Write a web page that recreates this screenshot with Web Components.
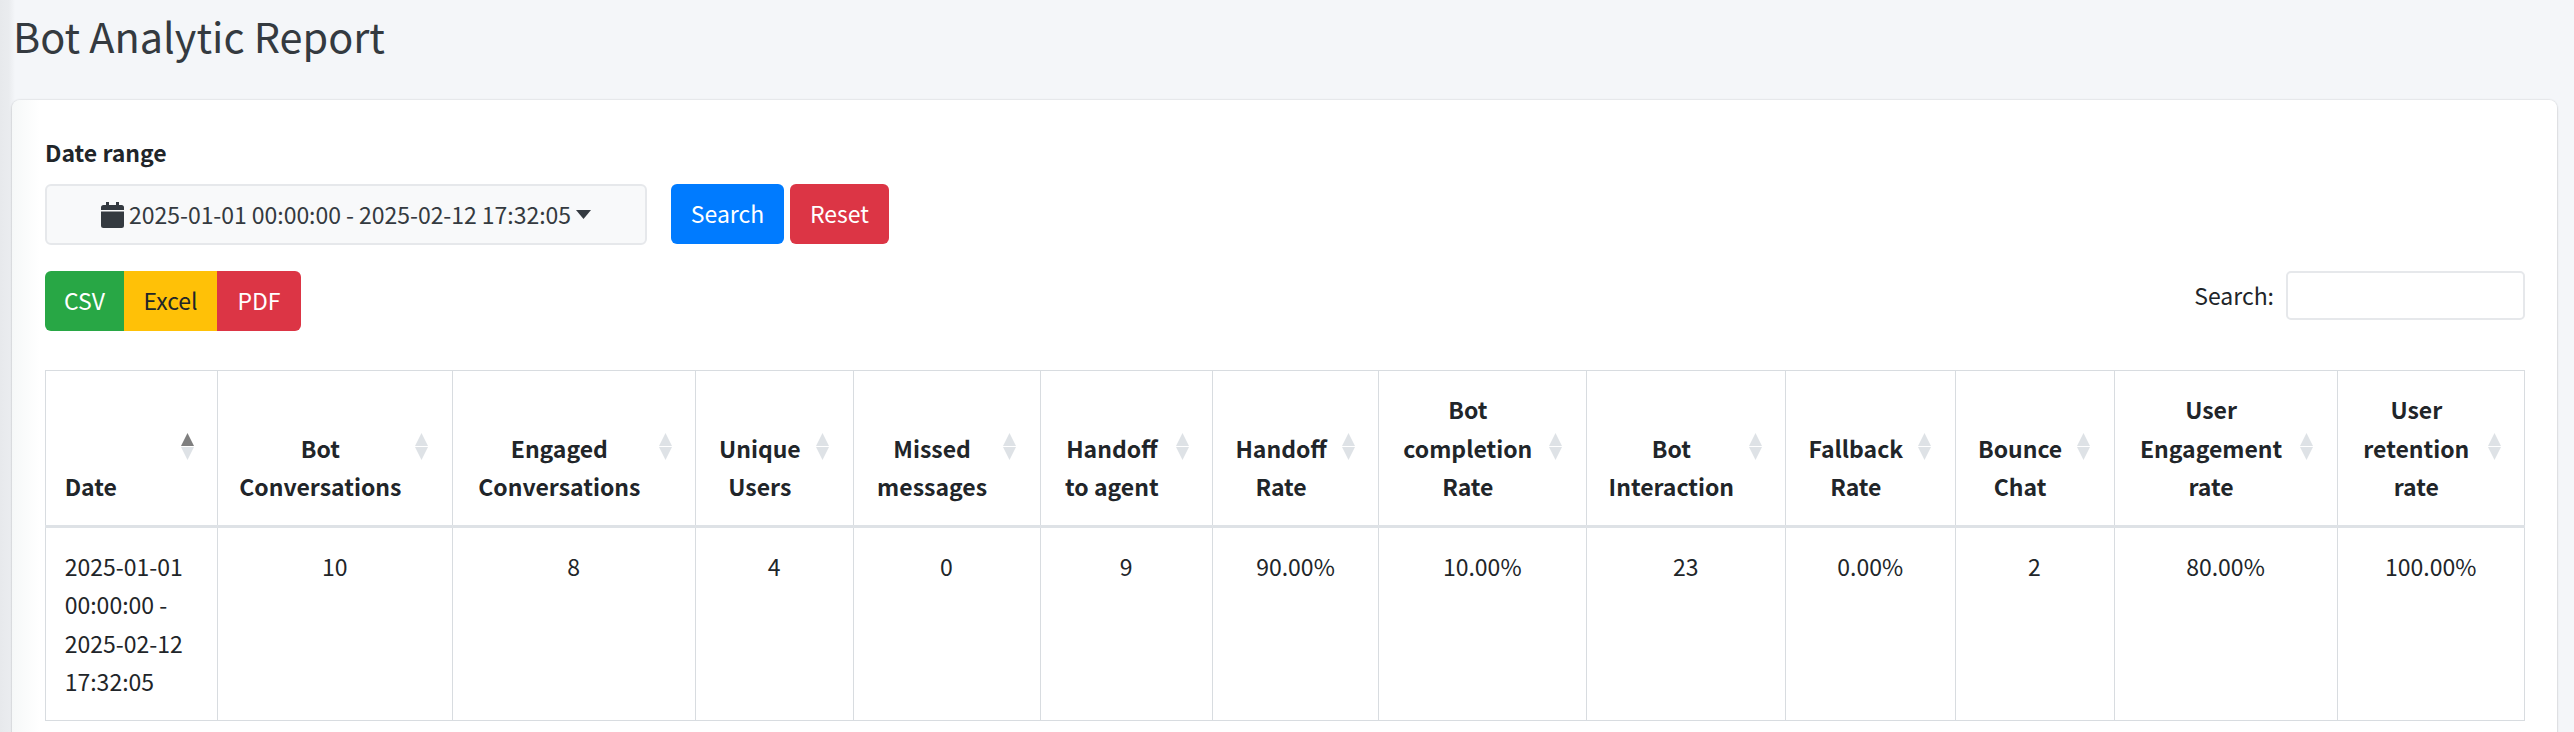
<!DOCTYPE html>
<html>
<head>
<meta charset="utf-8">
<title>Bot Analytic Report</title>
<style>
  html, body { margin: 0; height: 100%; overflow: hidden; }
  body {
    background: linear-gradient(90deg, #e7e9ec 0, #eaecef 9px, #f4f6f9 15px);
    color: #212529;
    font: 400 23px/38.4px "Noto Sans CJK SC", "Noto Sans", sans-serif;
  }
</style>
</head>
<body>

<template id="report-page-template">
  <style>
    :host { display: block; padding: 0 17px 0 12px; box-sizing: border-box; height: 732px; overflow: hidden; }
    h1 { margin: 0; height: 100px; padding-left: 1px; font-size: 41.4px; font-weight: 400; line-height: 70px; color: #343a40; }
    .card { background: linear-gradient(90deg, #f6f8f8, #fff 28px); border-radius: 8px; box-shadow: 0 0 2px rgba(0,0,0,.2), 0 2px 3px rgba(0,0,0,.1); padding: 32px 32px 40px 33px; height: 700px; box-sizing: border-box; }
  </style>
  <h1><slot name="title"></slot></h1>
  <div class="card"><slot></slot></div>
</template>

<template id="date-filter-template">
  <style>
    :host { display: block; }
    label { display: block; font-weight: 700; height: 52px; line-height: 40px; }
    .row { display: flex; align-items: flex-start; }
    .picker {
      width: 602px; height: 61px; box-sizing: border-box; margin-right: 24px;
      display: flex; align-items: center; justify-content: center; gap: 5px;
      background: #f8f9fa; border: 2px solid #e6e8eb; border-radius: 6px; color: #343a40;
      letter-spacing: -0.04px;
    }
    .picker svg { display: block; }
    ::slotted(action-button) { margin-right: 6px; }
  </style>
  <label>Date range</label>
  <div class="row">
    <div class="picker">
      <svg width="23" height="26" viewBox="0 0 23 26"><path fill="#343a40" d="M5 0h3v3h7V0h3v3h2.500A2.500 2.500 0 0 1 23 5.500V8H0V5.500A2.500 2.500 0 0 1 2.500 3H5zM0 9.500h23v14a2.500 2.500 0 0 1-2.500 2.500h-18A2.500 2.500 0 0 1 0 23.500z"/></svg>
      <span>2025-01-01 00:00:00 - 2025-02-12 17:32:05</span>
      <svg width="15" height="9" viewBox="0 0 15 9"><path fill="#343a40" d="M0 0h15L7.500 9z"/></svg>
    </div>
    <slot></slot>
  </div>
</template>

<template id="action-button-template">
  <style>
    :host { display: inline-block; }
    div { width: var(--w); height: 60px; box-sizing: border-box; padding-bottom: 2px; display: flex; align-items: center; justify-content: center; background: var(--bg); color: var(--fg, #fff); border-radius: var(--radius, 6px); }
  </style>
  <div><slot></slot></div>
</template>

<template id="table-toolbar-template">
  <style>
    :host { display: flex; justify-content: space-between; align-items: flex-start; margin-top: 26px; height: 99px; }
    .group { display: flex; }
    .search { display: flex; align-items: center; gap: 12px; height: 49px; }
    .box { width: 239px; height: 49px; box-sizing: border-box; background: #fff; border: 2px solid #e6e8eb; border-radius: 5px; }
  </style>
  <div class="group"><slot></slot></div>
  <div class="search"><span>Search:</span><div class="box"></div></div>
</template>

<template id="sort-arrows-template">
  <style>
    :host { display: block; flex: none; align-self: center; width: 13px; height: 27px; margin: 0 0 2px 11.500px; }
    svg { display: block; }
  </style>
  <svg width="13" height="27" viewBox="0 0 13 27">
    <path id="up" fill="#dee2e6" d="M6.500 0 13 13H0z"/>
    <path fill="#dee2e6" d="M0 14h13L6.500 27z"/>
  </svg>
</template>

<template id="report-table-template">
  <style>
    :host { display: block; margin-left: -0.500px; }
    table { border-collapse: collapse; table-layout: fixed; width: 2480px; }
    th, td { border: 1px solid #d8dce0; padding: 19.200px; text-align: center; vertical-align: top; box-sizing: border-box; }
    th { font-weight: 700; border-bottom: 3.200px solid #dee2e6; height: 155px; padding-right: 23.500px; }
    th div { display: flex; height: 115.200px; }
    th span { flex: 1; align-self: flex-end; white-space: pre-line; }
    th:first-child, td:first-child { text-align: left; }
    td { height: 192px; white-space: pre-line; }
  </style>
  <table>
    <colgroup></colgroup>
    <thead><tr></tr></thead>
    <tbody><tr></tr></tbody>
  </table>
</template>

<report-page>
  <span slot="title">Bot Analytic Report</span>
  <date-filter>
    <action-button style="--bg:#007bff;--w:113px">Search</action-button><action-button style="--bg:#dc3545;--w:99px">Reset</action-button>
  </date-filter>
  <table-toolbar>
    <action-button style="--bg:#28a745;--w:79px;--radius:6px 0 0 6px">CSV</action-button><action-button style="--bg:#ffc107;--fg:#212529;--w:93px;--radius:0">Excel</action-button><action-button style="--bg:#dc3545;--w:84px;--radius:0 6px 6px 0">PDF</action-button>
  </table-toolbar>
  <report-table></report-table>
</report-page>

<script>
  function fromTemplate (el, id) {
    let shadow = el.attachShadow({ mode: 'open' })
    shadow.appendChild(document.getElementById(id).content.cloneNode(true))
    return shadow
  }

  class ReportPage extends HTMLElement {
    constructor () { super(); fromTemplate(this, 'report-page-template') }
  }

  class DateFilter extends HTMLElement {
    constructor () { super(); fromTemplate(this, 'date-filter-template') }
  }

  class ActionButton extends HTMLElement {
    constructor () { super(); fromTemplate(this, 'action-button-template') }
  }

  class TableToolbar extends HTMLElement {
    constructor () { super(); fromTemplate(this, 'table-toolbar-template') }
  }

  class SortArrows extends HTMLElement {
    constructor () { super(); fromTemplate(this, 'sort-arrows-template') }

    connectedCallback () {
      if (this.hasAttribute('active')) this.shadowRoot.querySelector('#up').setAttribute('fill', '#7f7f7f')
    }
  }

  const COLUMNS = [
    ['Date', 172.5, '2025-01-01\n00:00:00 -\n2025-02-12\n17:32:05'],
    ['Bot\nConversations', 234.5, '10'],
    ['Engaged\nConversations', 243.5, '8'],
    ['Unique\nUsers', 157.5, '4'],
    ['Missed\nmessages', 187, '0'],
    ['Handoff\nto agent', 172.5, '9'],
    ['Handoff\nRate', 166, '90.00%'],
    ['Bot\ncompletion\nRate', 207.5, '10.00%'],
    ['Bot\nInteraction', 199.5, '23'],
    ['Fallback\nRate', 169.5, '0.00%'],
    ['Bounce\nChat', 159, '2'],
    ['User\nEngagement\nrate', 223, '80.00%'],
    ['User\nretention\nrate', 187.5, '100.00%']
  ]

  class ReportTable extends HTMLElement {
    constructor () {
      super()
      let shadow = fromTemplate(this, 'report-table-template')
      let cols = shadow.querySelector('colgroup')
      let head = shadow.querySelector('thead tr')
      let body = shadow.querySelector('tbody tr')
      COLUMNS.forEach(([title, width, value], i) => {
        let col = document.createElement('col')
        col.style.width = width + 'px'
        cols.appendChild(col)

        let th = document.createElement('th')
        let inner = document.createElement('div')
        let label = document.createElement('span')
        label.textContent = title
        inner.appendChild(label)
        let arrows = document.createElement('sort-arrows')
        if (i === 0) arrows.setAttribute('active', '')
        inner.appendChild(arrows)
        th.appendChild(inner)
        head.appendChild(th)

        let td = document.createElement('td')
        td.textContent = value
        body.appendChild(td)
      })
    }
  }

  customElements.define('report-page', ReportPage)
  customElements.define('date-filter', DateFilter)
  customElements.define('action-button', ActionButton)
  customElements.define('table-toolbar', TableToolbar)
  customElements.define('sort-arrows', SortArrows)
  customElements.define('report-table', ReportTable)
</script>
</body>
</html>
